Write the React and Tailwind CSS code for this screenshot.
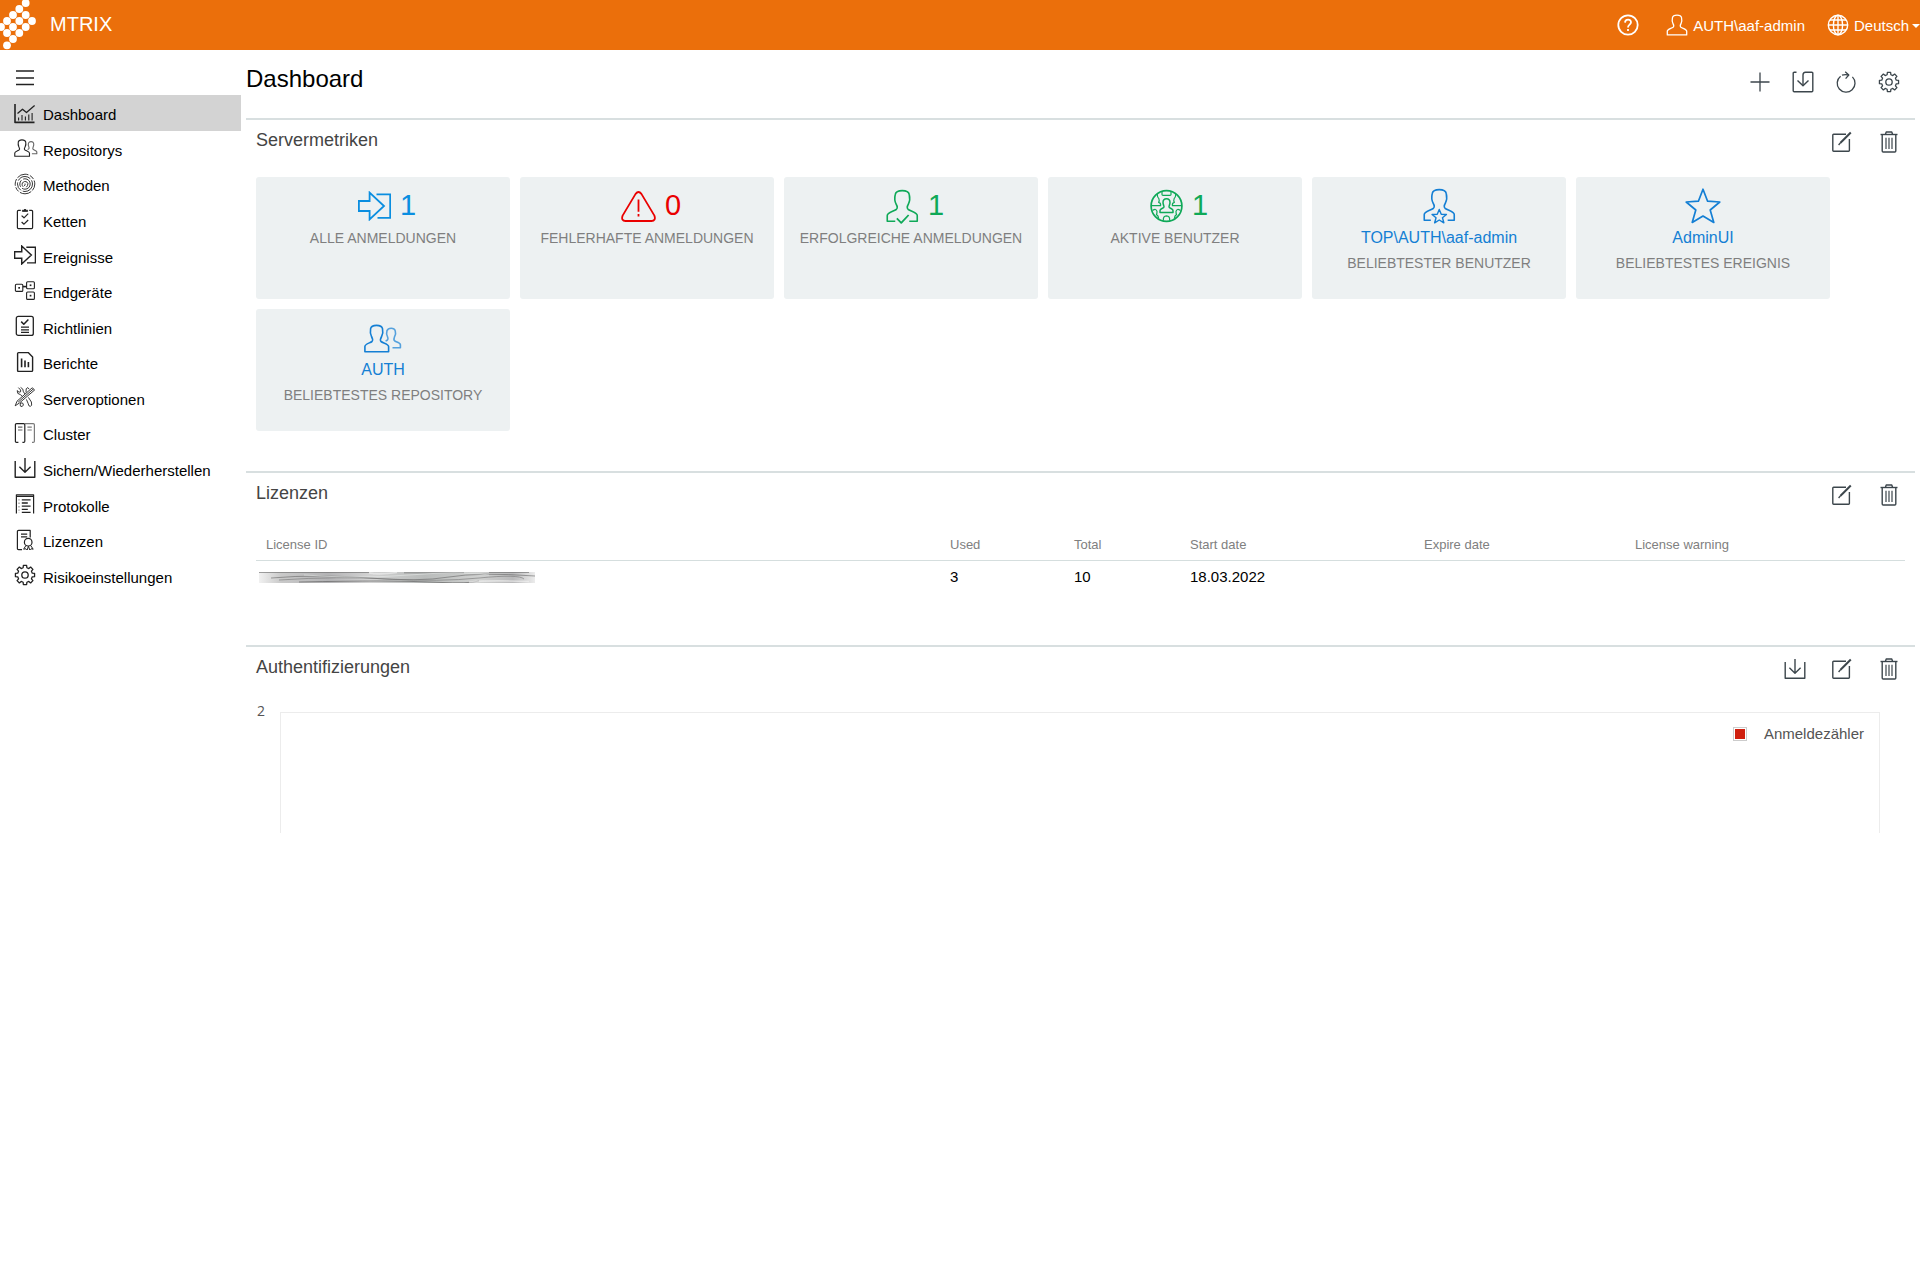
import React from "react";

function Svg({ w, h, box, sw = 1.3, className = "", children }) {
  return (
    <svg
      width={w}
      height={h}
      viewBox={box || `0 0 ${w} ${h}`}
      fill="none"
      stroke="currentColor"
      strokeWidth={sw}
      strokeLinejoin="round"
      className={`shrink-0 ${className}`}
      aria-hidden="true"
    >
      {children}
    </svg>
  );
}

/* ---------- shared shapes ---------- */

const BUST_OPEN =
  "M9 32.3H1V26.5C1 23.5 7 22.5 10 20.5C11.8 19 11 17 9.8 15C8.3 12 8.3 8.5 9 5.5C10 .3 22 .3 23 5.5C23.7 8.5 23.7 12 22.2 15C21 17 20.2 19 22 20.5C25 22.5 31 23.5 31 26.5V32.3H23";
const BUST_CLOSED = BUST_OPEN + "H9";

function gearPath(cx, cy, outer, inner) {
  const pts = [];
  for (let i = 0; i < 8; i++) {
    const a = (i * Math.PI) / 4 - Math.PI / 2;
    [
      [-0.25, inner],
      [-0.17, outer],
      [0.17, outer],
      [0.25, inner],
    ].forEach(([d, r]) => pts.push(`${(cx + r * Math.cos(a + d)).toFixed(2)} ${(cy + r * Math.sin(a + d)).toFixed(2)}`));
  }
  return `M${pts.join("L")}Z`;
}

const LOGO_DOTS = [
  [25.7, 3], [19.3, 9], [25.7, 15], [13, 15], [32, 21], [19.3, 21], [7, 21],
  [25.7, 27], [13, 27], [1, 27], [19.3, 33], [7, 33], [13, 39], [7, 45.3],
];

function Logo() {
  return (
    <svg width="36" height="50" viewBox="0 0 36 50" fill="#fff" className="shrink-0" aria-hidden="true">
      {LOGO_DOTS.map(([x, y]) => (
        <circle key={`${x}-${y}`} cx={x} cy={y} r="3.9" />
      ))}
    </svg>
  );
}

/* ---------- header and toolbar icons ---------- */

const HelpIcon = () => (
  <Svg w={22} h={22} sw={1.8}>
    <circle cx="11" cy="11" r="9.7" />
    <path d="M8 8.6C8.2 4.6 14 4.7 14 8.2C14 10.6 11 10.6 11 13.4" />
    <path d="M11 15V17" />
  </Svg>
);
const UserIcon = () => (
  <Svg w={22} h={22} box="0 0 32 34" sw={2}>
    <path d={BUST_CLOSED} />
  </Svg>
);
const GlobeIcon = () => (
  <Svg w={22} h={22} sw={1.4}>
    <circle cx="11" cy="11" r="9.7" />
    <ellipse cx="11" cy="11" rx="4.6" ry="9.7" />
    <path d="M11 1.3V20.7M1.3 11H20.7M2.9 6H19.1M2.9 16H19.1" />
  </Svg>
);
const MenuIcon = () => (
  <Svg w={20} h={18} sw={1.5}>
    <path d="M1 2H19M1 9H19M1 15.5H19" />
  </Svg>
);
const PlusIcon = () => (
  <Svg w={22} h={22}>
    <path d="M11 1.5V20.5M1.5 11H20.5" />
  </Svg>
);
const ImportIcon = () => (
  <Svg w={22} h={22} sw={1.4}>
    <path d="M4.5 1.2H2.2Q1.2 1.2 1.2 2.2V19.8Q1.2 20.8 2.2 20.8H19.8Q20.8 20.8 20.8 19.8V2.2Q20.8 1.2 19.8 1.2H13.5Q11 1.2 11 4V14.5" />
    <path d="M5.5 9.5L11 14.8L16.5 9.5" />
  </Svg>
);
const RefreshIcon = () => (
  <Svg w={22} h={22} sw={1.3}>
    <path d="M5.6 5.2A8.9 8.9 0 1 0 17.4 5.9" />
    <path d="M7 4.2Q10 3 13.6 4" />
    <path d="M10.2 .8L13.8 4L10.6 7.6" />
  </Svg>
);
const GearIcon = () => (
  <Svg w={22} h={22} sw={1.3}>
    <path d={gearPath(11, 11, 9.7, 7.5)} />
    <circle cx="11" cy="11" r="3.2" />
  </Svg>
);
const DownloadIcon = () => (
  <Svg w={22} h={22} sw={1.4}>
    <path d="M1.2 4V20.3H20.8V4" />
    <path d="M11 1V15.2M5.4 9.8L11 15.3L16.6 9.8" />
  </Svg>
);
const EditIcon = () => (
  <Svg w={22} h={22} sw={1.4}>
    <path d="M15 3.2H2.6Q1.8 3.2 1.8 4V19.6Q1.8 20.3 2.6 20.3H17.6Q18.4 20.3 18.4 19.6V8" />
    <path d="M19.8 1.5L9.5 11.8" strokeWidth="2" />
    <path d="M9.8 11.4L7.6 14" />
  </Svg>
);
const TrashIcon = () => (
  <Svg w={22} h={22} sw={1.4}>
    <path d="M2.5 3.5H19.5" />
    <path d="M7.5 3.2L8.2 1H13.8L14.5 3.2" />
    <path d="M4.2 3.8V20Q4.2 21 5.2 21H16.8Q17.8 21 17.8 20V3.8" />
    <path d="M8 6.8V18M11 6.8V18M14 6.8V18" strokeWidth="1.2" />
  </Svg>
);

/* ---------- navigation icons ---------- */

const NavDashboard = () => (
  <Svg w={22} h={22}>
    <path d="M1 2V20.4H20.5" strokeWidth="1.6" />
    <path d="M3.5 11.5L8.5 7.2L12.5 10.6L20.6 3.6" />
    <path d="M4.6 18.5V15.5M8 18.5V13M11.4 18.5V14.5M14.8 18.5V12.5M18.1 18.5V11" strokeWidth="1.1" />
  </Svg>
);

const UsersShape = () => (
  <>
    <path d="M.9 27.7V22.6C.9 20 6 19 8 17.5C9 16.5 8.6 14.5 7.5 12.5C6.2 10 6.2 7 6.6 4.7C7.5 .2 17.6 .2 18.5 4.7C19 7 19 10 17.6 12.5C16.5 14.5 16 16.5 17 17.5C19 19 24.6 20 24.6 22.6V27.7Z" />
    <path
      d="M21.6 17C24 16 24.4 14.8 23.6 13C22.4 10.6 22.4 8.4 23 6.6C24.2 3.4 30.2 3.4 31.2 6.6C31.9 8.6 31.6 11 30.4 13.2C29.6 15 29.9 16.2 30.8 17C32.8 18.2 36.4 18.7 36.4 20.7V23.7H28.5"
      strokeOpacity="0.7"
    />
  </>
);
const NavUsers = () => (
  <Svg w={24} h={18} box="0 0 38 29" sw={1.8}>
    <UsersShape />
  </Svg>
);
const NavFingerprint = () => (
  <Svg w={22} h={22} sw={0.9}>
    <circle cx="11" cy="11" r="9.8" strokeDasharray="7 1.6 12 1.6 5 1.6" />
    <circle cx="11" cy="11" r="7.5" strokeDasharray="14 2 9 2" />
    <circle cx="11" cy="11" r="5.2" strokeDasharray="11 2 7 2" />
    <path d="M9.2 13.8A3 3 0 1 1 13.9 10.4Q14 12.6 12.4 14.2" />
    <path d="M11 10.6Q11.6 12 10.2 13" />
  </Svg>
);
const NavChecklist = () => (
  <Svg w={22} h={22} sw={1.2}>
    <path d="M6.8 2.4H4.4Q3.4 2.4 3.4 3.4V19.6Q3.4 20.6 4.4 20.6H17.6Q18.6 20.6 18.6 19.6V3.4Q18.6 2.4 17.6 2.4H15.2" />
    <path d="M8.4 3.4V2.2H9.8Q11 0 12.2 2.2H13.6V3.4Z" fill="currentColor" strokeWidth="0.8" />
    <path d="M7.6 7.6L10 9.8L14.2 5.6M7.6 14L10 16.2L14.2 12" />
  </Svg>
);
const LoginShape = () => (
  <>
    <path d="M.9 10H11.6V1.6L26 15L11.6 28.4V20H.9Z" strokeLinejoin="miter" />
    <path d="M18.5 3.3H32.2V26.8H19.5" strokeLinejoin="miter" />
  </>
);
const NavLogin = () => (
  <Svg w={22} h={20} box="0 0 33 30" sw={2.2}>
    <LoginShape />
  </Svg>
);
const NavDevices = () => (
  <Svg w={22} h={22} sw={1.1}>
    <rect x="1.4" y="4.2" width="7.4" height="7.2" rx="1" />
    <rect x="12.6" y="1.8" width="7.8" height="7" rx="1" />
    <rect x="12.6" y="12" width="7.8" height="7.4" rx="1" />
    <path d="M8.8 6.6H12.6" strokeWidth="1.6" />
    <g fill="currentColor" stroke="none">
      <rect x="4.3" y="7" width="1.7" height="1.7" />
      <rect x="15.7" y="4.4" width="1.7" height="1.7" />
      <rect x="15.7" y="14.8" width="1.7" height="1.7" />
    </g>
  </Svg>
);
const NavPolicy = () => (
  <Svg w={22} h={22} sw={1.3}>
    <rect x="2.3" y="1.4" width="17" height="19" rx="2" />
    <path d="M7.2 6.6L9.8 9.2L14.4 4.4" strokeWidth="1.5" />
    <path d="M7 12.2H15M7 14.8H15M7 17.4H15" />
  </Svg>
);
const NavReport = () => (
  <Svg w={22} h={22} sw={1.4}>
    <path d="M4.6 1.6H14.2L18.6 6V19.4Q18.6 20.4 17.6 20.4H4.6Q3.6 20.4 3.6 19.4V2.6Q3.6 1.6 4.6 1.6Z" />
    <path d="M7.6 7.4V16.2M11 9.6V16.2M14.4 11V16.2" strokeWidth="1.6" />
  </Svg>
);
const NavTools = () => (
  <Svg w={22} h={22} sw={0.9}>
    <path d="M20.6 4L5.4 17L1.2 19.8L3 15.2L18.2 1.8Z" />
    <path d="M19.4 2.9L4.2 16.1" />
    <path d="M4.4 1.6L6.6 4V5.8L5 6.2L3.2 4.6Q2.8 8.2 6.4 8.6L8.4 10.4M11 8L9.4 5.8Q9.6 2.6 6.6 1.4" />
    <path d="M12 6.4L12.2 2.8L13.8 1.6L15.2 3.2" />
    <path d="M14.4 11.4L17.4 16Q18.4 20 16.4 20.4Q14.4 20.4 14.2 17.6L12.4 13.4" />
    <path d="M6.8 16.8Q9.6 16.6 9.4 19Q8.6 21 6.8 20.4Q5.4 19.4 6.8 16.8Z" />
  </Svg>
);
const NavCluster = () => (
  <Svg w={22} h={22} sw={1.2}>
    <path d="M4.4 20.4H2.6Q1.4 20.4 1.4 19.2V2.8Q1.4 1.6 2.6 1.6H9.6Q10.8 1.6 10.8 2.8V19.2Q10.8 20.4 9.6 20.4H8.4" />
    <path d="M4 5.2H8.4M4 8H8.4" strokeOpacity="0.7" />
    <g strokeOpacity="0.6">
      <path d="M11 1.6H19.2Q20.4 1.6 20.4 2.8V19.2Q20.4 20.4 19.2 20.4H18" />
      <path d="M13.4 5.2H17.8M13.4 8H17.8" />
    </g>
  </Svg>
);
const NavLogs = () => (
  <Svg w={22} h={22} sw={1.2}>
    <path d="M2.4 20.6V1.8H19.6V20.6" />
    <path d="M2.4 3.4H19.6" />
    <path d="M5 6.2V20" strokeDasharray="1.4 2" strokeOpacity="0.5" />
    <path d="M7.8 6.8H16.6M7.8 10H13.8M7.8 13.2H16.6M7.8 16.4H13.8M7.8 19.4H16.6" strokeWidth="1.3" />
  </Svg>
);
const NavLicense = () => (
  <Svg w={22} h={22} sw={1.2}>
    <path d="M8 20.6H4.6Q3.4 20.6 3.4 19.4V2.6Q3.4 1.4 4.6 1.4H16.2V8.6" />
    <path d="M7 5.2H13.2M7 7.8H13.2" />
    <circle cx="14.2" cy="13.2" r="3.8" />
    <path d="M12 16.4L9.6 20.2L12 19.8L13.2 21L14.4 17.2L15.8 21L17 19.8L19.2 20.2L16.6 16.4" strokeWidth="1" />
  </Svg>
);

/* ---------- metric icons ---------- */

const BigLogin = () => (
  <Svg w={33} h={30} sw={1.8}>
    <LoginShape />
  </Svg>
);
const BigWarning = () => (
  <Svg w={35} h={31} sw={1.8}>
    <path d="M14.6 2.9Q17.5 -.9 20.4 2.9L33.4 24.6Q35.2 29.8 30.4 30H4.6Q-.2 29.8 1.6 24.6Z" />
    <path d="M17.5 8.5V20.8M17.5 23V25.5" />
  </Svg>
);
const BigUserCheck = () => (
  <Svg w={33} h={35} box="0 0 32.5 35" sw={1.6}>
    <path d={BUST_OPEN} />
    <path d="M10.6 29.4L15 33.8L22.4 26" strokeWidth="1.8" />
  </Svg>
);
const BigActive = () => (
  <Svg w={33} h={34} sw={1.2}>
    <circle cx="16.5" cy="17" r="15.4" strokeWidth="1.7" />
    <path d="M10 23.5V21.4C10 19.8 12.6 19.6 13.8 18.4C14.6 17.4 13 16 13 13.6C13 8.6 20 8.6 20 13.6C20 16 18.4 17.4 19.2 18.4C20.4 19.6 23 19.8 23 21.4V23.5Z" strokeWidth="1.5" />
    <path d="M12 2.6V5.6Q12 6.4 13 6.4H20Q21 6.4 21 5.6V2.6" />
    <path d="M7.2 5Q7.4 8.6 8.8 9.4Q9.8 12 8.6 13.4Q11 14 10.6 16.6H1.4" />
    <path d="M25.8 5Q25.6 8.6 24.2 9.4Q23.2 12 24.4 13.4Q22 14 22.4 16.6H31.6" />
    <path d="M2.6 21.6Q6 19 7 22.4Q7 24.6 6.4 25.6Q8.6 27 8.6 29.4" />
    <path d="M30.4 21.6Q27 19 26 22.4Q26 24.6 26.6 25.6Q24.4 27 24.4 29.4" />
    <path d="M13.4 31.6Q12.8 27 16.5 26.8Q20.2 27 19.6 31.6" />
  </Svg>
);
const BigUserStar = () => (
  <Svg w={33} h={36} box="0 0 32.5 36" sw={1.6}>
    <path d={BUST_OPEN.replace("M9 32.3", "M7.6 32.3").replace(/H23$/, "H24.4")} />
    <path d="M16 21.4L18 26.2L23.2 26.5L19.2 29.8L20.6 34.8L16 32L11.4 34.8L12.8 29.8L8.8 26.5L14 26.2Z" strokeWidth="1.4" />
  </Svg>
);
const BigStar = () => (
  <Svg w={36} h={36} sw={1.7}>
    <path d="M18 1.2L22.6 13.2L34.8 14L25.2 22L28.8 34.4L18 28L7.2 34.4L10.8 22L1.2 14L13.4 13.2Z" />
  </Svg>
);
const BigUsers = () => (
  <Svg w={38} h={29} sw={1.6}>
    <UsersShape />
  </Svg>
);

/* ---------- data ---------- */

const NAV = [
  ["Dashboard", NavDashboard],
  ["Repositorys", NavUsers],
  ["Methoden", NavFingerprint],
  ["Ketten", NavChecklist],
  ["Ereignisse", NavLogin],
  ["Endgeräte", NavDevices],
  ["Richtlinien", NavPolicy],
  ["Berichte", NavReport],
  ["Serveroptionen", NavTools],
  ["Cluster", NavCluster],
  ["Sichern/Wiederherstellen", DownloadIcon],
  ["Protokolle", NavLogs],
  ["Lizenzen", NavLicense],
  ["Risikoeinstellungen", GearIcon],
];

const METRICS = [
  { icon: BigLogin, count: "1", label: "ALLE ANMELDUNGEN", color: "text-[#0a8ee0]" },
  { icon: BigWarning, count: "0", label: "FEHLERHAFTE ANMELDUNGEN", color: "text-[#ea0000]" },
  { icon: BigUserCheck, count: "1", label: "ERFOLGREICHE ANMELDUNGEN", color: "text-[#0fa958]" },
  { icon: BigActive, count: "1", label: "AKTIVE BENUTZER", color: "text-[#0fa958]" },
  { icon: BigUserStar, name: "TOP\\AUTH\\aaf-admin", label: "BELIEBTESTER BENUTZER", color: "text-[#147fd4]" },
  { icon: BigStar, name: "AdminUI", label: "BELIEBTESTES EREIGNIS", color: "text-[#147fd4]" },
  { icon: BigUsers, name: "AUTH", label: "BELIEBTESTES REPOSITORY", color: "text-[#147fd4]" },
];

/* ---------- page parts ---------- */

function IconButton({ label, children }) {
  return (
    <button type="button" aria-label={label} className="cursor-pointer text-[#3c464c]">
      {children}
    </button>
  );
}

function TopBar() {
  return (
    <header className="flex h-[50px] items-center bg-[#eb6f0b] text-white">
      <Logo />
      <span className="ml-[14px] pb-[2px] text-[20px] leading-6">MTRIX</span>
      <div className="ml-auto flex items-center text-[15px] leading-5">
        <button type="button" aria-label="Hilfe" className="mr-[27px] cursor-pointer">
          <HelpIcon />
        </button>
        <button type="button" className="mr-[22px] flex cursor-pointer items-center gap-[5px]">
          <UserIcon />
          <span className="pt-[2px]">AUTH\aaf-admin</span>
        </button>
        <button type="button" className="flex cursor-pointer items-center gap-[5px]">
          <GlobeIcon />
          <span className="flex items-center gap-[3px] pt-[2px]">
            Deutsch
            <svg width="8" height="4" viewBox="0 0 8 4" fill="currentColor" aria-hidden="true">
              <path d="M0 0H8L4 4Z" />
            </svg>
          </span>
        </button>
      </div>
    </header>
  );
}

function Sidebar() {
  return (
    <aside className="w-[241px] shrink-0">
      <div className="flex h-[45px] items-center pt-[10px] pl-[15px]">
        <button type="button" aria-label="Menü" className="cursor-pointer text-[#222]">
          <MenuIcon />
        </button>
      </div>
      <nav className="grid h-[498px] auto-rows-fr">
        {NAV.map(([label, Icon], i) => (
          <a
            key={label}
            href="#"
            className={`flex items-center pl-[14px] text-[15px] leading-5 text-black ${i === 0 ? "bg-[#d3d3d3]" : ""}`}
          >
            <span className="flex w-[29px] items-center text-[#222]">
              <Icon />
            </span>
            <span className="pt-[5px]">{label}</span>
          </a>
        ))}
      </nav>
    </aside>
  );
}

function Section({ title, download, className = "", children }) {
  return (
    <section className={`border-t-2 border-[#d8dfe0] px-[10px] ${className}`}>
      <div className="flex h-[42px] items-center justify-between pt-[2px]">
        <h2 className="pb-1 text-[18px] leading-6 text-[#444]">{title}</h2>
        <div className="flex gap-[25px] pr-[5px]">
          {download && (
            <IconButton label="Herunterladen">
              <DownloadIcon />
            </IconButton>
          )}
          <IconButton label="Bearbeiten">
            <EditIcon />
          </IconButton>
          <IconButton label="Löschen">
            <TrashIcon />
          </IconButton>
        </div>
      </div>
      {children}
    </section>
  );
}

function MetricCard({ icon: Icon, count, name, label, color }) {
  return (
    <li className="flex h-[122px] w-[254px] flex-col items-center rounded-[3px] bg-[#edf1f2] pt-[10px]">
      <div className={`flex h-[38px] items-center gap-[9px] ${color} ${count ? "pl-2" : ""}`}>
        <Icon />
        {count && <span className="pb-[2px] text-[29px] leading-9">{count}</span>}
      </div>
      {name && <div className={`mb-[5px] pt-[3px] text-[16px] leading-5 ${color}`}>{name}</div>}
      <div className={`text-[14px] leading-5 text-[#7f7f7f] ${count ? "pt-[3px]" : ""}`}>{label}</div>
    </li>
  );
}

/* Scribbled strip that hides the license number */
function HiddenValue() {
  return (
    <svg width="276" height="11" viewBox="0 0 276 11" fill="none" role="img" aria-label="License ID">
      <defs>
        <linearGradient id="strip" x1="0" x2="1" y1="0" y2="0">
          <stop offset="0" stopColor="#f1f1f1" />
          <stop offset="0.08" stopColor="#c9c9c9" />
          <stop offset="0.25" stopColor="#b4b4b6" />
          <stop offset="0.4" stopColor="#d2d2d2" />
          <stop offset="0.6" stopColor="#b9bcbb" />
          <stop offset="0.8" stopColor="#d0d1d0" />
          <stop offset="0.92" stopColor="#b9b9ba" />
          <stop offset="1" stopColor="#ececec" />
        </linearGradient>
      </defs>
      <rect width="276" height="11" fill="url(#strip)" />
      <g strokeOpacity="0.6">
        <path d="M0 .5H110M145 .8H205M230 .5H270" stroke="#666" />
        <path d="M12 6Q60 2 110 6T190 5T276 4" stroke="#666" />
        <path d="M20 8Q80 4 130 7T220 6T265 7" stroke="#777" />
        <path d="M40 10Q90 9 120 9T180 10.4T220 9" stroke="#555" />
        <path d="M45 3Q100 7 150 3T230 3" stroke="#e6e9e7" strokeWidth="1.2" />
        <path d="M110 1Q120 3 138 .5M210 10Q230 8 270 9.5" stroke="#f3f3f3" strokeWidth="1.6" />
      </g>
    </svg>
  );
}

function LicenseTable() {
  const th = "px-[10px] pb-[5px] align-bottom font-normal";
  const td = "px-[10px]";
  return (
    <table className="w-full table-fixed border-collapse text-left">
      <colgroup>
        <col className="w-[684px]" />
        <col className="w-[124px]" />
        <col className="w-[116px]" />
        <col className="w-[234px]" />
        <col className="w-[211px]" />
        <col className="w-[280px]" />
      </colgroup>
      <thead>
        <tr className="h-[45px] border-b border-[#d5dede] text-[13px] leading-5 text-[#808080]">
          <th className={th}>License ID</th>
          <th className={th}>Used</th>
          <th className={th}>Total</th>
          <th className={th}>Start date</th>
          <th className={th}>Expire date</th>
          <th className={th}>License warning</th>
        </tr>
      </thead>
      <tbody>
        <tr className="h-[34px] text-[15px] leading-5 text-black">
          <td className="pl-[3px]">
            <HiddenValue />
          </td>
          <td className={td}>3</td>
          <td className={td}>10</td>
          <td className={td}>18.03.2022</td>
          <td className={td} />
          <td className={td} />
        </tr>
      </tbody>
    </table>
  );
}

function LoginChart() {
  return (
    <div className="mt-[12px] flex pr-[25px]">
      <span className="w-6 pl-px font-['Open_Sans',sans-serif] text-[14px] leading-5 text-[#545454]">2</span>
      <div className="mt-[11px] flex h-[121px] flex-1 items-start justify-end gap-[17px] border-x border-t border-[#ececec] pt-[10px] pr-[15px]">
        <span className="mt-1 size-[14px] border border-[#ccc] p-px">
          <span className="block size-full bg-[#d0200f]" />
        </span>
        <span className="text-[15px] leading-[22px] text-[#545454]">Anmeldezähler</span>
      </div>
    </div>
  );
}

export default function App() {
  return (
    <div className="min-h-screen bg-white font-['Liberation_Sans',Arial,sans-serif]">
      <TopBar />
      <div className="flex">
        <Sidebar />
        <main className="min-w-0 flex-1 pr-[5px] pl-[5px]">
          <div className="flex h-[68px] items-center justify-between pr-[15px]">
            <h1 className="pb-[10px] text-[24px] leading-8 text-black">Dashboard</h1>
            <div className="flex gap-[21px] pb-1">
              <IconButton label="Hinzufügen">
                <PlusIcon />
              </IconButton>
              <IconButton label="Speichern">
                <ImportIcon />
              </IconButton>
              <IconButton label="Aktualisieren">
                <RefreshIcon />
              </IconButton>
              <IconButton label="Einstellungen">
                <GearIcon />
              </IconButton>
            </div>
          </div>

          <Section title="Servermetriken" className="pb-[40px]">
            <ul className="flex flex-wrap gap-[10px] pt-[15px]">
              {METRICS.map((m) => (
                <MetricCard key={m.label} {...m} />
              ))}
            </ul>
          </Section>

          <Section title="Lizenzen" className="pb-[51px]">
            <LicenseTable />
          </Section>

          <Section title="Authentifizierungen" download>
            <LoginChart />
          </Section>
        </main>
      </div>
    </div>
  );
}
